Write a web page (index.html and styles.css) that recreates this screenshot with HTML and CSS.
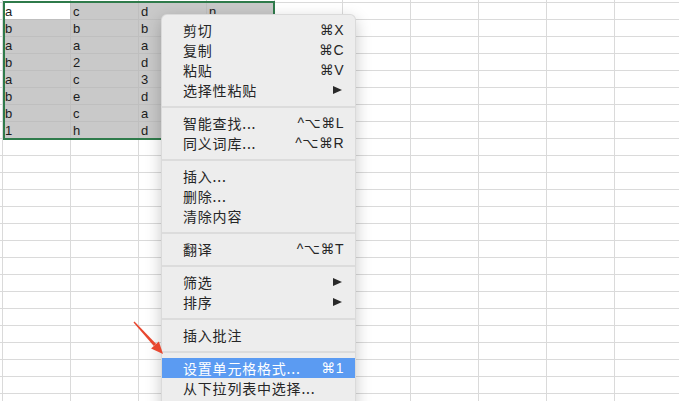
FILE: index.html
```html
<!DOCTYPE html>
<html lang="zh-CN">
<head>
    <meta charset="UTF-8">
    <meta name="viewport" content="width=device-width, initial-scale=1.0">
    <title>右键菜单</title>
    <link rel="stylesheet" href="styles.css">
    <script>
        window.addEventListener('DOMContentLoaded', () => {
            const sheet = document.getElementById('sheet');
            // visible cell values, rows 1-8 and columns A-D
            const data = [
                ['a', 'c', 'd', 'n'],
                ['b', 'b', 'b', ''],
                ['a', 'a', 'a', ''],
                ['b', '2', 'd', ''],
                ['a', 'c', '3', ''],
                ['b', 'e', 'd', ''],
                ['b', 'c', 'a', ''],
                ['1', 'h', 'd', '']
            ];
            const rows = 25;
            const cols = 11;

            for (let r = 0; r < rows; r++) {
                for (let c = 0; c < cols; c++) {
                    const cell = document.createElement('div');
                    cell.className = 'cell';
                    const inData = r >= 1 && r <= 8 && c >= 1 && c <= 4;
                    if (inData) {
                        cell.textContent = data[r - 1][c - 1];
                        cell.classList.add(r === 1 && c === 1 ? 'active' : 'picked');
                    }
                    sheet.appendChild(cell);
                }
            }
        });
    </script>
</head>
<body>
    <div class="sheet" id="sheet"></div>
    <div class="selection"></div>

    <div class="menu">
        <div class="item"><span>剪切</span><span class="key">⌘X</span></div>
        <div class="item"><span>复制</span><span class="key">⌘C</span></div>
        <div class="item"><span>粘贴</span><span class="key">⌘V</span></div>
        <div class="item"><span>选择性粘贴</span><span class="sub"></span></div>
        <div class="sep"></div>
        <div class="item"><span>智能查找...</span><span class="key">^⌥⌘L</span></div>
        <div class="item"><span>同义词库...</span><span class="key">^⌥⌘R</span></div>
        <div class="sep"></div>
        <div class="item"><span>插入...</span></div>
        <div class="item"><span>删除...</span></div>
        <div class="item"><span>清除内容</span></div>
        <div class="sep"></div>
        <div class="item"><span>翻译</span><span class="key">^⌥⌘T</span></div>
        <div class="sep"></div>
        <div class="item"><span>筛选</span><span class="sub"></span></div>
        <div class="item"><span>排序</span><span class="sub"></span></div>
        <div class="sep"></div>
        <div class="item"><span>插入批注</span></div>
        <div class="sep"></div>
        <div class="item hover"><span>设置单元格格式...</span><span class="key">⌘1</span></div>
        <div class="item"><span>从下拉列表中选择...</span></div>
        <div class="item"><span>显示拼音字段</span></div>
    </div>

    <!-- red pointer drawn on the screenshot -->
    <svg class="pointer" width="45" height="45" viewBox="0 0 45 45">
        <polygon points="9.5,6.5 8.5,7.5 28.8,31.1 31.2,28.9" fill="#e8472f"/>
        <polygon points="26.1,33.6 33.9,26.4 38,39" fill="#e8472f"/>
    </svg>
</body>
</html>
```

FILE: styles.css
```css
body {
    margin: 0;
    background-color: #ffffff;
    font-family: "Liberation Sans", Arial, sans-serif;
    overflow: hidden;
    position: relative;
    height: 401px;
}

.sheet {
    display: grid;
    grid-template-columns: 3px repeat(10, 68px);
    grid-template-rows: 3px repeat(24, 17px);
}

.cell {
    box-sizing: border-box;
    border-right: 1px solid #dadada;
    border-bottom: 1px solid #dadada;
    font-size: 13px;
    line-height: 18px;
    padding-left: 2px;
    color: #1c1c1c;
    overflow: hidden;
    white-space: nowrap;
}

.cell.picked {
    background-color: #c9c9c9;
    border-color: #bfbfbf;
}

.cell.active {
    background-color: #ffffff;
    border-color: #bfbfbf;
}

.selection {
    position: absolute;
    left: 3px;
    top: 1px;
    width: 272px;
    height: 139px;
    box-sizing: border-box;
    border: 2px solid #2f7b4b;
}

.menu {
    position: absolute;
    left: 161px;
    top: 14px;
    width: 195px;
    height: 420px;
    box-sizing: border-box;
    padding: 5px 0;
    background-color: #ededed;
    border: 1px solid rgba(0, 0, 0, 0.08);
    border-radius: 6px;
    box-shadow: 0 5px 16px rgba(0, 0, 0, 0.22);
    font-family: "Noto Sans CJK SC", sans-serif;
    font-size: 14px;
    letter-spacing: 0.8px;
    color: #262626;
}

.item {
    display: flex;
    justify-content: space-between;
    align-items: center;
    height: 20px;
    padding: 0 11px 0 21px;
}

.item.hover {
    background-color: #5b9bf2;
    color: #ffffff;
}

.key {
    font-family: "Liberation Sans", "DejaVu Sans", sans-serif;
    font-size: 14px;
    letter-spacing: 0.5px;
}

.sub {
    width: 0;
    height: 0;
    margin-right: 2px;
    border-left: 9px solid #2a2a2a;
    border-top: 4.5px solid transparent;
    border-bottom: 4.5px solid transparent;
}

.sep {
    height: 2px;
    margin: 6px 0 5px;
    background-color: #dcdcdc;
}

.pointer {
    position: absolute;
    left: 125px;
    top: 315px;
}
```
